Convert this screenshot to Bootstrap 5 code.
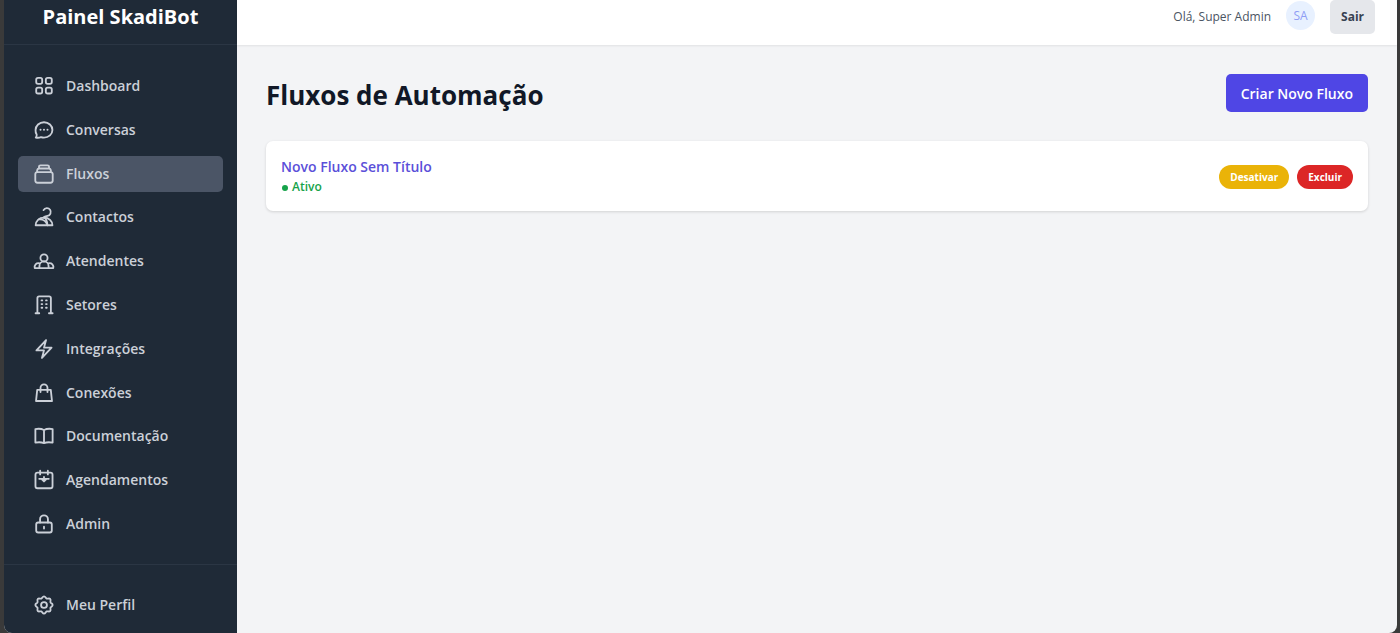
<!DOCTYPE html>
<html lang="pt">
<head>
<meta charset="utf-8">
<meta name="viewport" content="width=device-width, initial-scale=1">
<title>Painel SkadiBot</title>
<link href="https://cdn.jsdelivr.net/npm/bootstrap@5.3.0/dist/css/bootstrap.min.css" rel="stylesheet">
<style>
  body { background: #3a3a3a; font-family: "Open Sans", "Noto Sans", sans-serif; font-size: 14px; line-height: 20px; }
  .app-shell { min-height: 100vh; margin: 0 3px 0 4px; border-radius: 0 0 8px 8px; background: #f3f4f6; }
  .side-panel { width: 233px; background: #1f2a37; }
  .brand-bar { height: 45px; padding-bottom: 10px; border-bottom: 1px solid #2b3644; font-size: 20px; color: #fff; }
  .side-menu { padding: 23px 14px 22px; }
  .side-foot { padding: 22px 14px 10px; border-top: 1px solid #2b3644; }
  .side-link { height: 36px; padding: 0 15px; gap: 11px; border-radius: 5px; color: #cbd0d8; font-weight: 600; text-decoration: none; }
  .side-link:hover, .side-link.active { background: #4b5566; }
  .side-link svg { width: 22px; height: 22px; fill: none; stroke: currentColor; stroke-width: 2; stroke-linecap: round; stroke-linejoin: round; }
  .top-bar { height: 45px; padding: 0 22px 11px; gap: 15px; background: #fff; box-shadow: 0 1px 2px rgba(0,0,0,.08); color: #4b5563; font-size: 12px; }
  .avatar { width: 29px; height: 29px; margin-bottom: 3px; background: #e8f1ff; color: #8f9df5; }
  .btn-exit { height: 34px; padding: 0 11px; border: 0; border-radius: 5px; background: #e5e7eb; color: #374151; font-size: 12px; font-weight: 700; }
  .page-body { padding: 29px; }
  .page-title { padding-top: 4px; font-size: 26px; line-height: 34px; color: #111827; }
  .btn-create { height: 38px; padding: 0 15px; border: 0; border-radius: 5px; background: #4f46e5; color: #fff; font-size: 14px; font-weight: 600; }
  .flow-card { min-height: 70px; margin-top: 29px; padding: 10px 15px 8px; border-radius: 7px; background: #fff; box-shadow: 0 1px 3px rgba(0,0,0,.14); }
  .flow-name { color: #5b4fd9; font-weight: 600; text-decoration: none; }
  .flow-status { color: #16a34a; font-size: 12px; font-weight: 600; gap: 4px; }
  .status-dot { width: 6px; height: 6px; margin: 2px 0 0 1px; background: #16a34a; }
  .btn-chip { height: 24px; padding: 0 11px; border: 0; border-radius: 12px; color: #fff; font-size: 10px; font-weight: 700; line-height: 24px; }
  .chip-warn { background: #eab308; }
  .chip-danger { background: #dc2626; }
</style>
</head>
<body>
<div class="app-shell d-flex overflow-hidden">
  <aside class="side-panel d-flex flex-column flex-shrink-0">
    <div class="brand-bar d-flex align-items-center justify-content-center fw-bold">Painel SkadiBot</div>
    <nav class="side-menu d-flex flex-column justify-content-between flex-grow-1">
      <a href="#" class="side-link d-flex align-items-center"><svg viewBox="0 0 24 24"><rect x="3.500" y="3.200" width="6.500" height="6.500" rx="2"/><rect x="14" y="3.200" width="6.500" height="6.500" rx="2"/><rect x="3.500" y="13.700" width="6.500" height="6.500" rx="2"/><rect x="14" y="13.700" width="6.500" height="6.500" rx="2"/></svg>Dashboard</a>
      <a href="#" class="side-link d-flex align-items-center"><svg viewBox="0 0 24 24"><path d="M3 20.200c.9-1 1.200-2.200 1-3.300A8 8 0 0 1 2.800 12C2.800 7.400 6.900 3.500 12 3.500s9.200 3.900 9.200 8.500-4.100 8.300-9.200 8.300c-1.200 0-2.300-.2-3.300-.6-1.800.8-3.600.9-5.700.5z"/><path stroke-width="2.200" d="M8.200 11.700h.01M12 11.700h.01M15.800 11.700h.01"/></svg>Conversas</a>
      <a href="#" class="side-link active d-flex align-items-center" aria-current="page"><svg viewBox="0 0 24 24"><path d="M6.500 5.600V4.200c0-1 .7-1.700 1.700-1.700h7.600c1 0 1.700.7 1.700 1.700v1.400M4.500 10V8.300c.2-1.500 1-2.300 2.300-2.300h10.400c1.300 0 2.100.8 2.300 2.300V10"/><rect x="2.500" y="10" width="19" height="11.500" rx="2.400"/></svg>Fluxos</a>
      <a href="#" class="side-link d-flex align-items-center"><svg viewBox="0 0 24 24"><path d="M11.500 4.500a4.200 4.200 0 1 1 4.300 6.200c-1.600.3-3.300.7-4.500 1.900"/><path d="M2.900 21c0-4.600 3.800-8.300 9.100-8.300s9.200 3.700 9.200 8.300z"/><path d="M6.500 14.600c4.200-.4 7.900 2.200 9.300 6.400M12 12.700c2 .6 3.300 2.400 3.800 8.300"/></svg>Contactos</a>
      <a href="#" class="side-link d-flex align-items-center"><svg viewBox="0 0 24 24"><circle cx="12" cy="8.600" r="3.900"/><path d="M7 19.800v-2.200c0-2.900 2.100-5.100 5-5.100s5 2.200 5 5.100v2.200zM7 19.800H1.900c-.7-3.400 1.500-6 5.300-5.300M17 19.800h5.100c.7-3.400-1.500-6-5.300-5.300"/></svg>Atendentes</a>
      <a href="#" class="side-link d-flex align-items-center"><svg viewBox="0 0 24 24"><path d="M2.800 21h4M17.400 21h4M4.800 21V4.500c0-1.200.7-1.900 1.900-1.900h10.900c1.200 0 1.900.7 1.900 1.900V21"/><path d="M9.300 7h.8M14.200 7h.8M9.300 11h.8M14.200 11h.8M9.300 15h.8M14.200 15h.8"/></svg>Setores</a>
      <a href="#" class="side-link d-flex align-items-center"><svg viewBox="0 0 24 24"><path d="M3.750 13.500 14.250 2.250 12 10.500h8.250L9.750 21.750 12 13.500z"/></svg>Integrações</a>
      <a href="#" class="side-link d-flex align-items-center"><svg viewBox="0 0 24 24"><path d="M4.600 8.500h14.800l1.300 12.200H3.300zM8.200 11V6.300a3.800 3.800 0 0 1 7.600 0V11"/></svg>Conexões</a>
      <a href="#" class="side-link d-flex align-items-center"><svg viewBox="0 0 24 24"><path d="M12 5.400C9.500 4.100 5.800 3.800 2.600 4.400v14.800c3.200-.6 6.900-.5 9.400.6 2.500-1.100 6.200-1.200 9.400-.6V4.400C18.200 3.800 14.500 4.100 12 5.400zM12 5.400v14.400"/></svg>Documentação</a>
      <a href="#" class="side-link d-flex align-items-center"><svg viewBox="0 0 24 24"><rect x="2.700" y="4" width="18.600" height="17" rx="2.200"/><path d="M7.800 1.900v4M16.200 1.900v4M6.800 10.700h10.400M12 8.600v4.600M10 11.600l2 2 2-2"/></svg>Agendamentos</a>
      <a href="#" class="side-link d-flex align-items-center"><svg viewBox="0 0 24 24"><rect x="3.500" y="10.400" width="17" height="10.900" rx="2.200"/><path d="M7.700 10.400V6.800a4.300 4.300 0 0 1 8.600 0v3.600M12 14.900v2"/></svg>Admin</a>
    </nav>
    <div class="side-foot">
      <a href="#" class="side-link d-flex align-items-center"><svg viewBox="0 0 24 24"><path d="M12 2.600c1.700 0 1.700 1.900 3 2.400 1.300.5 2.500-.8 3.700.4 1.200 1.200-.1 2.400.4 3.700.5 1.200 2.300 1.300 2.300 2.900s-1.800 1.700-2.300 2.900c-.5 1.300.8 2.500-.4 3.700-1.200 1.200-2.400-.1-3.700.4-1.300.5-1.300 2.400-3 2.400s-1.700-1.900-3-2.400c-1.300-.5-2.500.8-3.700-.4-1.200-1.200.1-2.400-.4-3.700-.5-1.200-2.300-1.300-2.300-2.900s1.800-1.700 2.300-2.900c.5-1.300-.8-2.500.4-3.700 1.200-1.200 2.400.1 3.700-.4 1.300-.5 1.300-2.400 3-2.400z"/><circle cx="12" cy="12" r="3.200"/></svg>Meu Perfil</a>
    </div>
  </aside>
  <div class="flex-grow-1">
    <header class="top-bar d-flex align-items-center justify-content-end">
      <span>Olá, Super Admin</span>
      <span class="avatar rounded-circle d-flex align-items-center justify-content-center">SA</span>
      <button type="button" class="btn btn-exit">Sair</button>
    </header>
    <main class="page-body">
      <div class="d-flex align-items-center justify-content-between">
        <h1 class="page-title fw-bold m-0">Fluxos de Automação</h1>
        <button type="button" class="btn btn-create">Criar Novo Fluxo</button>
      </div>
      <div class="flow-card d-flex align-items-center justify-content-between">
        <div>
          <a href="#" class="flow-name">Novo Fluxo Sem Título</a>
          <div class="flow-status d-flex align-items-center"><span class="status-dot rounded-circle"></span>Ativo</div>
        </div>
        <div class="d-flex gap-2">
          <button type="button" class="btn btn-chip chip-warn">Desativar</button>
          <button type="button" class="btn btn-chip chip-danger">Excluir</button>
        </div>
      </div>
    </main>
  </div>
</div>
<script src="https://cdn.jsdelivr.net/npm/bootstrap@5.3.0/dist/js/bootstrap.bundle.min.js"></script>
</body>
</html>
